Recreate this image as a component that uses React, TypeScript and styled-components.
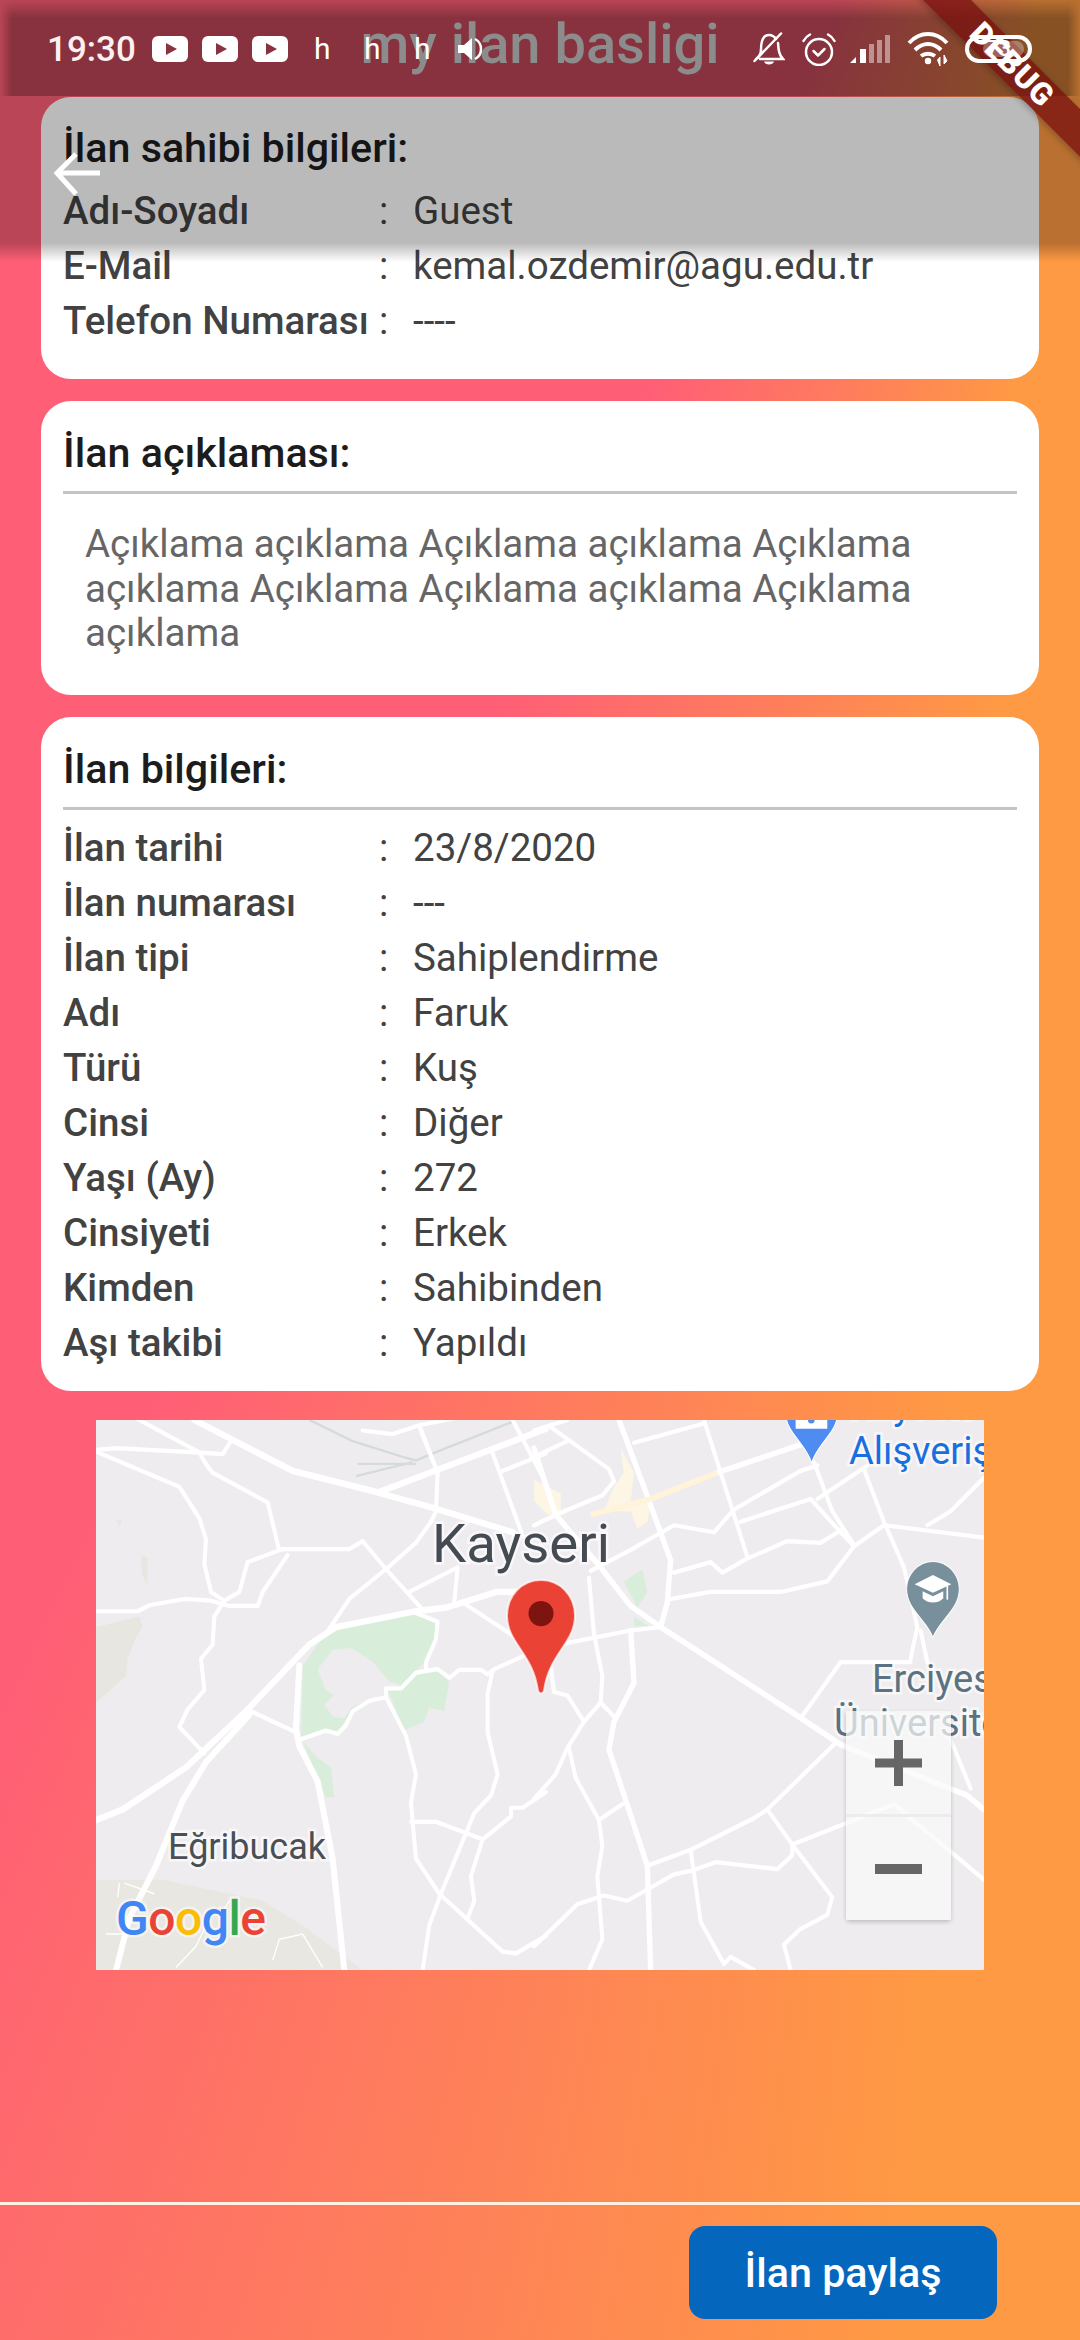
import React from "react";
import styled, { createGlobalStyle } from "styled-components";

const GlobalStyle = createGlobalStyle`
  html, body {
    margin: 0;
    padding: 0;
  }
  body {
    font-family: Roboto, "Noto Sans", sans-serif;
  }
`;

const Page = styled.div`
  position: relative;
  width: 1080px;
  height: 2340px;
  overflow: hidden;
  display: flex;
  flex-direction: column;
  box-sizing: border-box;
  padding-top: 97px;
  background: conic-gradient(
    from 183deg at 1065px -464px,
    #fe9a43 0deg,
    #ff5f76 23deg,
    #ff5f76 300deg,
    #fe9a43 340deg,
    #fe9a43 360deg
  );
`;

const Cards = styled.div`
  display: flex;
  flex-direction: column;
  gap: 22px;
  padding: 0 41px;
`;

const Card = styled.section<{ $top: number; $bottom: number }>`
  background: #fff;
  border-radius: 30px;
  padding: ${(p) => p.$top}px 22px ${(p) => p.$bottom}px;
`;

const CardTitle = styled.h2<{ $gap?: number }>`
  margin: 0 0 ${(p) => p.$gap ?? 0}px;
  font-size: 41.25px;
  line-height: 55px;
  font-weight: 500;
  color: #1c1c1c;
`;

const Divider = styled.div`
  height: 3px;
  margin: 10px 0;
  background: #c4c4c4;
`;

const Row = styled.div`
  display: grid;
  grid-template-columns: 316px 34px 1fr;
  font-size: 38.5px;
  line-height: 55px;
  color: #424242;
`;

const Label = styled.span`
  font-weight: 500;
  white-space: nowrap;
`;

const Description = styled.p`
  margin: 28px 0 0;
  padding: 0 22px;
  font-size: 38.5px;
  line-height: 44.7px;
  color: #666;
`;

const MapBox = styled.div`
  position: relative;
  flex: none;
  width: 888px;
  height: 550px;
  margin: 29px auto 0;
  overflow: hidden;
  background: #efecf0;
`;

const MapArt = styled.svg`
  position: absolute;
  inset: 0;
  display: block;
`;

const MapLabel = styled.span<{ $x: number; $y: number; $size: number; $color: string }>`
  position: absolute;
  left: ${(p) => p.$x}px;
  top: ${(p) => p.$y}px;
  transform: translateY(-50%);
  font-size: ${(p) => p.$size}px;
  line-height: 1;
  color: ${(p) => p.$color};
  white-space: nowrap;
  paint-order: stroke fill;
  -webkit-text-stroke: 5px rgba(255, 255, 255, 0.6);
`;

const Pin = styled.svg`
  position: absolute;
  left: 409px;
  top: 158px;
`;

const GoogleMark = styled.div`
  position: absolute;
  left: 20px;
  top: 475px;
  font-size: 48px;
  line-height: 1;
  font-weight: 500;
  letter-spacing: -0.5px;
  -webkit-text-stroke: 5px rgba(255, 255, 255, 0.5);
`;

const GoogleLetter = styled.span<{ $color: string }>`
  color: ${(p) => p.$color};
  paint-order: stroke fill;
`;

const ZoomControls = styled.div`
  position: absolute;
  right: 33px;
  bottom: 50px;
  width: 105px;
  height: 209px;
  display: flex;
  flex-direction: column;
  border-radius: 0 0 4px 4px;
  box-shadow: 0 2px 4px rgba(0, 0, 0, 0.2);
`;

const ZoomButton = styled.div`
  flex: 1;
  display: flex;
  align-items: center;
  justify-content: center;
  background: rgba(249, 249, 249, 0.72);
  & + & {
    border-top: 3px solid rgba(235, 235, 235, 0.9);
  }
`;

const Footer = styled.footer`
  margin-top: auto;
  display: flex;
  justify-content: flex-end;
  padding: 21px 83px;
  border-top: 3px solid #fff1e2;
`;

const ShareButton = styled.button`
  width: 308px;
  height: 93px;
  border: none;
  border-radius: 16px;
  background: #0466bd;
  color: #fff;
  font-family: inherit;
  font-size: 41.25px;
  font-weight: 500;
`;

const AppBar = styled.header`
  position: absolute;
  top: 0;
  left: 0;
  right: 0;
  height: 262px;
  background: linear-gradient(
    to bottom,
    rgba(0, 0, 0, 0.27) 243px,
    rgba(0, 0, 0, 0) 262px
  );
`;

const StatusShade = styled.div`
  position: absolute;
  top: 0;
  left: 0;
  right: 0;
  height: 96px;
  background: rgba(0, 0, 0, 0.27);
  mask-image: linear-gradient(to bottom, transparent 0, #000 18px),
    linear-gradient(to right, transparent 0, #000 12px, #000 1068px, transparent 1080px);
  mask-composite: intersect;
`;

const AppTitle = styled.h1`
  position: absolute;
  top: 11px;
  left: 0;
  right: 0;
  margin: 0;
  text-align: center;
  font-size: 56px;
  line-height: 66px;
  font-weight: 500;
  color: #8c8c8c;
`;

const BackArrow = styled.svg`
  position: absolute;
  left: 52px;
  top: 151px;
`;

const Ribbon = styled.div`
  position: absolute;
  left: 812px;
  top: 48px;
  width: 400px;
  height: 34px;
  transform: rotate(45deg);
  background: rgba(120, 15, 15, 0.75);
  box-shadow: 0 2px 6px rgba(0, 0, 0, 0.25);
  color: #fff;
  font-size: 31px;
  line-height: 34px;
  font-weight: 900;
  letter-spacing: 1px;
  text-align: center;
`;

const StatusBar = styled.div`
  position: absolute;
  top: 30px;
  left: 47px;
  height: 38px;
  width: 985px;
  display: flex;
  align-items: center;
`;

const Time = styled.span`
  width: 105px;
  font-size: 35px;
  font-weight: 500;
  color: #fcf0f0;
`;

const NotifyIcons = styled.div`
  display: flex;
  align-items: center;
  gap: 14px;
`;

const HMark = styled.span`
  width: 50px;
  font-size: 30px;
  line-height: 38px;
  color: #fff;
`;

const HMarks = styled.div`
  display: flex;
  margin-left: 26px;
  margin-right: -7px;
`;

const SystemIcons = styled.div`
  margin-left: auto;
  display: flex;
  align-items: center;
  color: #fff;
  svg {
    display: block;
    flex: none;
  }
`;

const IconSlot = styled.div<{ $gap: number }>`
  margin-left: ${(p) => p.$gap}px;
`;

const Battery = styled.div`
  position: relative;
  width: 67px;
  height: 28px;
  margin-left: 14px;
  box-sizing: border-box;
  border: 4px solid #fff;
  border-radius: 15px;
  font-size: 22px;
  line-height: 20px;
  font-weight: 500;
  text-align: center;
  color: #fff;
  &::before {
    content: "";
    position: absolute;
    inset: 2px 4px 2px 14px;
    border-radius: 8px;
    background: rgba(255, 255, 255, 0.3);
  }
`;

const BatteryValue = styled.span`
  position: relative;
`;

const ownerRows = [
  ["Adı-Soyadı", "Guest"],
  ["E-Mail", "kemal.ozdemir@agu.edu.tr"],
  ["Telefon Numarası", "----"],
];

const adRows = [
  ["İlan tarihi", "23/8/2020"],
  ["İlan numarası", "---"],
  ["İlan tipi", "Sahiplendirme"],
  ["Adı", "Faruk"],
  ["Türü", "Kuş"],
  ["Cinsi", "Diğer"],
  ["Yaşı (Ay)", "272"],
  ["Cinsiyeti", "Erkek"],
  ["Kimden", "Sahibinden"],
  ["Aşı takibi", "Yapıldı"],
];

const googleLetters: [string, string][] = [
  ["G", "#4285f4"],
  ["o", "#ea4335"],
  ["o", "#fbbc05"],
  ["g", "#4285f4"],
  ["l", "#34a853"],
  ["e", "#ea4335"],
];

// roads traced in the crop coordinates (3 x 2.85 per px), left half of the map
const leftRoads = [
  "M120 -5L310 92Q330 130 350 150L515 235L548 365",
  "M0 85L60 80L300 92L380 97L405 60",
  "M0 90L250 190L310 280L330 340L325 410L345 490L385 515L430 490L455 405L560 368",
  "M560 368H760L800 345L870 425L975 535",
  "M0 545H125L160 528L265 510L345 515L400 530H485L500 490L575 385",
  "M385 515L355 560L350 640L315 680L325 770L275 825L250 875L325 950",
  "M465 830L600 890",
  "M870 425L760 510L700 595",
  "M870 425L960 350L1005 290L1020 260L1025 150L970 20",
  "M615 910L690 885L725 895L750 870L770 830L820 800L870 790V765H915L960 720L1025 710L1060 735L1090 712H1155L1175 725L1195 710L1300 665",
  "M870 790L930 900L960 1010L945 1090L960 1250L1030 1350L1220 1515L1260 1520L1350 1470",
  "M1190 715L1175 780V890L1205 1010L1185 1070L1135 1120L1035 1350L1000 1440L980 1568",
  "M945 1145H1020L1160 1195L1245 1130V1105H1280L1350 1060",
  "M1160 1195L1125 1300L1135 1370L1115 1420",
  "M960 550L1025 575L1020 625L990 690V710",
  "M1100 520L1260 620",
  "M940 490L1085 420L1075 520",
  "M800 30L890 40L970 15L1100 -10",
  "M1190 95L1280 330",
  "M1250 0L1350 180",
  "M1220 145L1350 95",
  "M970 15L1025 150",
];

const leftMajor = [
  "M295 0L590 145L840 205L1010 250L1250 320",
  "M0 1140L80 1110L270 990L450 830L640 640L720 590L960 545L1050 535L1100 520L1200 490H1330",
  "M460 840L330 975L260 1085L180 1270L100 1420L60 1568",
  "M610 700L600 880L610 930L665 1030L710 1250L745 1568",
  "M850 205L1030 140L1350 25",
];

// right half of the map, same crop scale
const rightRoads = [
  "M50 20L225 140L240 175L205 215L90 260L0 300",
  "M0 30L100 0",
  "M0 105L100 60",
  "M300 65L510 10",
  "M510 0L640 390",
  "M170 430L290 370L420 300L540 320L600 255L800 145L850 130",
  "M620 290L830 225L920 320L960 360",
  "M420 435L530 405L565 435L640 395L760 345L860 350L920 315",
  "M410 510L530 490H740L880 460L960 360L1050 300L1350 335",
  "M840 120L895 260L960 355",
  "M990 140L1050 290L1110 420L1150 590L1130 680",
  "M1000 130L850 225",
  "M1180 300L1250 260L1350 165",
  "M75 640L290 600L380 590",
  "M165 450L180 610L205 730L200 805L150 860L100 935L65 1010L0 1080",
  "M200 805L245 850",
  "M50 700L60 775L100 785L150 860",
  "M105 935L125 1020L195 1140L205 1215L190 1300L205 1480L165 1568",
  "M195 1140L265 1095",
  "M340 1270L470 1225L660 1135L700 1110L900 925",
  "M800 850L920 690H1130",
  "M1160 600L1180 690",
  "M700 1110L775 1210L895 1360L880 1410L800 1450L750 1495L770 1568",
  "M775 1210L1080 1095",
  "M0 1500L130 1380L210 1355L280 1370L420 1295L470 1285L545 1260L730 1280L775 1240V1210",
  "M470 1225L500 1430L570 1550L590 1530L660 1568",
  "M1250 910L1310 1050",
  "M1080 1095L1350 1310",
];

const rightMajor = [
  "M255 0L345 230L410 400L400 520L380 590",
  "M0 80L65 270L200 420L290 530L380 590L770 830L920 925L1300 1070L1350 1110",
  "M290 600L300 750L240 860L225 940L340 1270L350 1568",
];

function Roads({ paths, width }: { paths: string[]; width: number }) {
  return (
    <g fill="none" stroke="#fff" strokeWidth={width} strokeLinejoin="round" strokeLinecap="round">
      {paths.map((d) => (
        <path key={d} d={d} />
      ))}
    </g>
  );
}

function MapDrawing() {
  return (
    <MapArt width={888} height={550} viewBox="0 0 888 550">
      <g transform="scale(0.3333 0.3509)">
        <path fill="#e8e6e0" d="M0 590L130 560L140 590L120 620L95 680L90 730L0 805Z" />
        <path fill="#e9e7e1" d="M0 1310H200L500 1370L620 1440L800 1568H0Z" />
        <path
          fill="#d9eeda"
          fillRule="evenodd"
          d="M620 700L680 620L720 595L960 552L1025 580L1015 630L985 690L960 715L915 760L865 765L862 790L820 795L770 825L745 860L725 890L690 880L615 905ZM665 710L690 770L715 785L685 810L710 845L745 850L765 820L820 795L865 790L870 765L915 755L880 745L830 690L765 650L710 655Z"
        />
        <path fill="#d9eeda" d="M875 770L920 765L965 720L1025 715L1060 745L1045 830L1000 820L985 860L925 885Z" />
        <path fill="#d9eeda" d="M620 915L660 960L705 990L715 1075L690 1075L665 1020Z" />
        <path
          fill="none"
          stroke="#d5dadc"
          strokeWidth={7}
          d="M640 0L770 60L920 105L960 115L1050 80L1130 50L1250 5M785 125L960 125M780 160L950 120"
        />
        <path fill="#e8e6e0" d="M135 385L155 392L155 470L138 440ZM60 285L78 285L70 305Z" />
        <Roads paths={leftRoads} width={12} />
        <Roads paths={leftMajor} width={18} />
        <path
          fill="none"
          stroke="#fff"
          strokeWidth={4}
          d="M70 1320L65 1360M85 1320L175 1350M240 1560L300 1500L340 1420M400 1370L370 1420M530 1540L550 1480L620 1465L680 1560M30 1465H90"
        />
      </g>
      <g transform="translate(438 0) scale(0.3333 0.3509)">
        <path
          fill="#fdf6e5"
          d="M260 80L300 150L290 230L350 240L340 290L310 310L290 260L210 260L240 190L270 150ZM0 170L80 210V270H40L0 230Z"
        />
        <path fill="#d9eeda" d="M270 460L325 425L340 490L310 535ZM300 560L345 588H300Z" />
        <Roads paths={rightRoads} width={12} />
        <Roads paths={rightMajor} width={16} />
        <path fill="none" stroke="#fff3da" strokeWidth={16} d="M170 270L350 225L550 150" />
        <path fill="none" stroke="#fff" strokeWidth={16} d="M550 150L800 70L830 55" />
        <path
          fill="#4f8cf1"
          stroke="#fff"
          strokeWidth={3}
          d="M755 -20C755 35 815 65 833 122C851 65 911 35 911 -20Z"
        />
        <path fill="#fff" d="M785 -20H880V25H785Z" />
        <circle cx={832} cy={0} r={10} fill="#4f8cf1" />
        <path
          fill="#78909c"
          stroke="#fff"
          strokeWidth={3}
          d="M1197 403C1153 403 1118 440 1118 482C1118 540 1178 570 1197 620C1216 570 1276 540 1276 482C1276 440 1241 403 1197 403Z"
        />
        <path fill="#fff" d="M1197 442L1252 468L1197 492L1142 468Z" />
        <path fill="#fff" d="M1166 488L1197 502L1228 488V508C1215 524 1180 524 1166 508Z" />
        <path fill="none" stroke="#fff" strokeWidth={5} d="M1240 472V512" />
      </g>
    </MapArt>
  );
}

function PlayBadge() {
  return (
    <svg width={36} height={26} viewBox="0 0 36 26">
      <rect width={36} height={26} rx={6} fill="#fff" />
      <path d="M14 7L25 13L14 19Z" fill="#8a3340" />
    </svg>
  );
}

function SpeakerIcon() {
  return (
    <svg width={28} height={26} viewBox="0 0 28 26">
      <path d="M1 9H7L15 2V24L7 17H1Z" fill="#fff" />
      <path d="M18 3C26 7 26 19 18 23" fill="none" stroke="#fff" strokeWidth={2.5} />
    </svg>
  );
}

function BellIcon() {
  return (
    <svg width={32} height={34} viewBox="0 0 32 34">
      <g fill="none" stroke="#fff" strokeWidth={2.5} strokeLinecap="round">
        <path d="M8 18C8 9 10 3 16 3C19 3 21 4 23 7M25 11C25.500 18 26 23 30 27H7" />
        <path d="M8 18C8 22 6 25 3 27" />
        <path d="M1.500 29L28 1.500" />
      </g>
      <path d="M11 29.500H21C20 33.500 12 33.500 11 29.500Z" fill="#fff" />
    </svg>
  );
}

function AlarmIcon() {
  return (
    <svg width={34} height={33} viewBox="0 0 34 33">
      <g fill="none" stroke="#fff" strokeWidth={2.5} strokeLinecap="round" strokeLinejoin="round">
        <circle cx={17} cy={19} r={13} />
        <path d="M1.500 8C3 5 5 3 8 1.500" />
        <path d="M32.500 8C31 5 29 3 26 1.500" />
        <path d="M11.500 18L16 22.500L22.500 16" />
      </g>
    </svg>
  );
}

function SignalIcon() {
  return (
    <svg width={40} height={30} viewBox="0 0 40 30">
      <path d="M0 29L6 23V29Z" fill="#fff" />
      <rect x={10} y={15} width={6} height={14} fill="#fff" />
      <rect x={19} y={10} width={5} height={19} fill="#fff" opacity={0.45} />
      <rect x={27} y={6} width={5} height={23} fill="#fff" opacity={0.45} />
      <rect x={35} y={1} width={5} height={28} fill="#fff" opacity={0.45} />
    </svg>
  );
}

function WifiIcon() {
  return (
    <svg width={44} height={34} viewBox="0 0 44 34">
      <g fill="none" stroke="#fff" strokeWidth={4}>
        <path d="M2 11C13 -1 29 -1 40 11" />
        <path d="M8 18C16 10 26 10 34 18" />
        <path d="M14 24C18 21 24 21 28 24" />
      </g>
      <circle cx={21} cy={29} r={3.2} fill="#fff" />
      <path d="M33 34V25L30.5 28ZM37 23V32L40 29Z" fill="#fff" stroke="#fff" strokeWidth={1} />
    </svg>
  );
}

function InfoRow({ label, value }: { label: string; value: string }) {
  return (
    <Row>
      <Label>{label}</Label>
      <span>:</span>
      <span>{value}</span>
    </Row>
  );
}

export default function App() {
  return (
    <Page>
      <GlobalStyle />
      <Cards>
        <Card $top={24} $bottom={31}>
          <CardTitle $gap={7}>İlan sahibi bilgileri:</CardTitle>
          {ownerRows.map(([label, value]) => (
            <InfoRow key={label} label={label} value={value} />
          ))}
        </Card>
        <Card $top={25} $bottom={39}>
          <CardTitle>İlan açıklaması:</CardTitle>
          <Divider />
          <Description>
            Açıklama açıklama Açıklama açıklama Açıklama açıklama Açıklama Açıklama açıklama
            Açıklama açıklama
          </Description>
        </Card>
        <Card $top={25} $bottom={21}>
          <CardTitle>İlan bilgileri:</CardTitle>
          <Divider />
          {adRows.map(([label, value]) => (
            <InfoRow key={label} label={label} value={value} />
          ))}
        </Card>
      </Cards>

      <MapBox>
        <MapDrawing />
        <MapLabel $x={336} $y={123} $size={54.5} $color="#454b52">Kayseri</MapLabel>
        <MapLabel $x={72} $y={427} $size={36} $color="#4a4f55">Eğribucak</MapLabel>
        <MapLabel $x={753} $y={-14} $size={38} $color="#1a6fdf">Kayseri Park</MapLabel>
        <MapLabel $x={753} $y={31} $size={38} $color="#1a6fdf">Alışveriş</MapLabel>
        <MapLabel $x={776} $y={259} $size={38} $color="#5b7282">Erciyes</MapLabel>
        <MapLabel $x={738} $y={303} $size={38} $color="#5b7282">Üniversitesi</MapLabel>
        <Pin width={72} height={118} viewBox="0 0 72 116" preserveAspectRatio="none">
          <path
            d="M36 2C17 2 2 17 2 37C2 64 28 74 33 111Q36 116 39 111C44 74 70 64 70 37C70 17 55 2 36 2Z"
            fill="#ea4335"
            stroke="#fff"
            strokeOpacity={0.7}
            strokeWidth={2}
          />
          <circle cx={36} cy={35} r={12.5} fill="#7d1410" />
        </Pin>
        <GoogleMark>
          {googleLetters.map(([letter, color], i) => (
            <GoogleLetter key={i} $color={color}>{letter}</GoogleLetter>
          ))}
        </GoogleMark>
        <ZoomControls>
          <ZoomButton>
            <svg width={47} height={46} viewBox="0 0 47 46">
              <path d="M0 18.5H47V27.5H0ZM19 0H28V46H19Z" fill="#666" />
            </svg>
          </ZoomButton>
          <ZoomButton>
            <svg width={47} height={10} viewBox="0 0 47 10">
              <rect width={47} height={10} fill="#666" />
            </svg>
          </ZoomButton>
        </ZoomControls>
      </MapBox>

      <Footer>
        <ShareButton>İlan paylaş</ShareButton>
      </Footer>

      <AppBar>
        <StatusShade />
        <AppTitle>my ilan basligi</AppTitle>
        <BackArrow width={50} height={46} viewBox="0 0 50 46">
          <path d="M48 22H6M24 3L5 22L24 43" fill="none" stroke="#fff" strokeWidth={5} />
        </BackArrow>
      </AppBar>

      <Ribbon>DEBUG</Ribbon>

      <StatusBar>
        <Time>19:30</Time>
        <NotifyIcons>
          <PlayBadge />
          <PlayBadge />
          <PlayBadge />
        </NotifyIcons>
        <HMarks>
          <HMark>h</HMark>
          <HMark>h</HMark>
          <HMark>h</HMark>
        </HMarks>
        <SpeakerIcon />
        <SystemIcons>
          <BellIcon />
          <IconSlot $gap={17}>
            <AlarmIcon />
          </IconSlot>
          <IconSlot $gap={14}>
            <SignalIcon />
          </IconSlot>
          <IconSlot $gap={17}>
            <WifiIcon />
          </IconSlot>
          <Battery>
            <BatteryValue>73</BatteryValue>
          </Battery>
        </SystemIcons>
      </StatusBar>
    </Page>
  );
}
